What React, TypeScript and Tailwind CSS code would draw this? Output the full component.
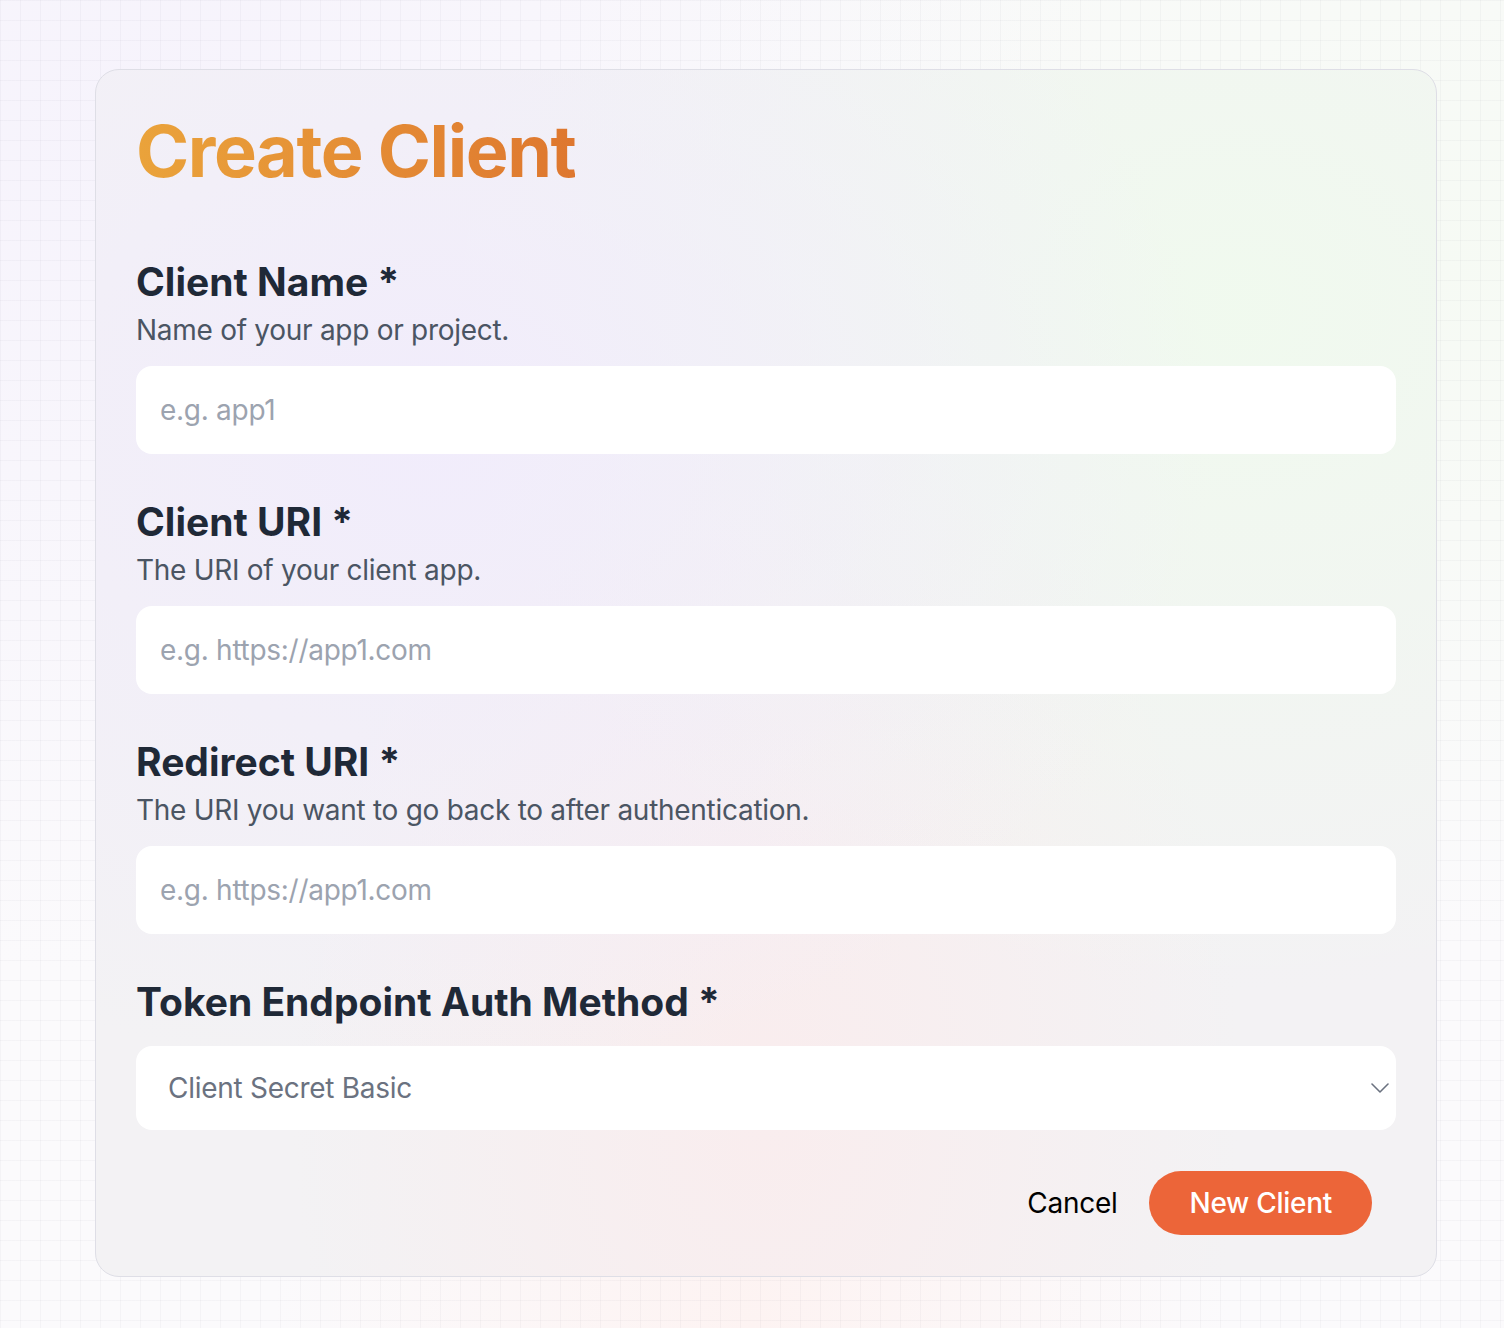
import * as React from "react";

const fields = [
  {
    id: "client_name",
    label: "Client Name *",
    hint: "Name of your app or project.",
    placeholder: "e.g. app1",
  },
  {
    id: "client_uri",
    label: "Client URI *",
    hint: "The URI of your client app.",
    placeholder: "e.g. https://app1.com",
  },
  {
    id: "redirect_uri",
    label: "Redirect URI *",
    hint: "The URI you want to go back to after authentication.",
    placeholder: "e.g. https://app1.com",
  },
];

function Field({
  id,
  label,
  hint,
  placeholder,
}: {
  id: string;
  label: string;
  hint: string;
  placeholder: string;
}) {
  return (
    <div className="flex flex-col">
      <label
        htmlFor={id}
        className="text-[39px] leading-[56px] font-bold text-[#1f2937]"
      >
        {label}
      </label>
      <p className="text-[28px] leading-[40px] tracking-[-0.01em] text-[#4b5563]">
        {hint}
      </p>
      <input
        id={id}
        placeholder={placeholder}
        className="mt-4 h-[88px] w-full rounded-2xl bg-white px-6 text-[28px] tracking-[-0.01em] text-[#1f2937] outline-none placeholder:text-[#9ca3af]"
      />
    </div>
  );
}

export default function App() {
  const [method, setMethod] = React.useState("client_secret_basic");

  return (
    <div className="min-h-screen w-full bg-[#fbfafc] bg-[linear-gradient(rgba(60,60,90,0.035)_1px,transparent_1px),linear-gradient(90deg,rgba(60,60,90,0.035)_1px,transparent_1px),radial-gradient(ellipse_at_10%_10%,#f6f3fc,transparent_50%),radial-gradient(ellipse_at_95%_20%,#f6faf4,transparent_45%),radial-gradient(ellipse_at_50%_100%,#fdf3f2,transparent_45%)] bg-[size:20px_20px,20px_20px,100%_100%,100%_100%,100%_100%] pt-[69px] pb-[51px] pl-[95px] font-['Inter',sans-serif]">
      <form className="w-[1342px] rounded-[24px] border border-[#dedee6] bg-[#f3f2f4] bg-[radial-gradient(ellipse_at_25%_30%,rgba(241,236,252,0.95),transparent_55%),radial-gradient(ellipse_at_85%_20%,rgba(240,250,238,0.95),transparent_50%),radial-gradient(ellipse_at_50%_85%,rgba(250,236,237,0.9),transparent_50%)] px-10 pt-10 pb-[41px]">
        <h1 className="inline-block bg-gradient-to-r from-[#eaa33b] to-[#de772f] bg-clip-text pt-px text-[72px] leading-[80px] font-bold tracking-[-0.02em] text-transparent">
          Create Client
        </h1>

        <div className="mt-[63px] flex flex-col gap-10">
          {fields.map((f) => (
            <Field key={f.id} {...f} />
          ))}

          <div className="flex flex-col">
            <label
              htmlFor="auth_method"
              className="text-[39px] leading-[56px] font-bold text-[#1f2937]"
            >
              Token Endpoint Auth Method *
            </label>
            <div className="relative mt-4">
              <select
                id="auth_method"
                value={method}
                onChange={(e) => setMethod(e.target.value)}
                className="h-[84px] w-full appearance-none rounded-2xl bg-white px-8 text-[28px] tracking-[-0.01em] text-[#6b7280] outline-none"
              >
                <option value="client_secret_basic">Client Secret Basic</option>
                <option value="client_secret_post">Client Secret Post</option>
                <option value="none">None</option>
              </select>
              <svg
                className="pointer-events-none absolute top-1/2 right-[7px] -translate-y-1/2"
                width="18"
                height="10"
                viewBox="0 0 18 10"
                fill="none"
              >
                <path
                  d="M1 1l8 8 8-8"
                  stroke="#6b7280"
                  strokeWidth="1.6"
                  strokeLinecap="round"
                  strokeLinejoin="round"
                />
              </svg>
            </div>
          </div>
        </div>

        <div className="mt-[41px] flex items-center justify-end gap-2 pr-6">
          <button
            type="button"
            className="px-6 text-[28px] leading-[40px] tracking-[-0.01em] text-black"
          >
            Cancel
          </button>
          <button
            type="submit"
            className="h-16 rounded-full bg-[#ec6539] px-10 text-[28px] font-medium tracking-[-0.01em] text-white"
          >
            New Client
          </button>
        </div>
      </form>
    </div>
  );
}
